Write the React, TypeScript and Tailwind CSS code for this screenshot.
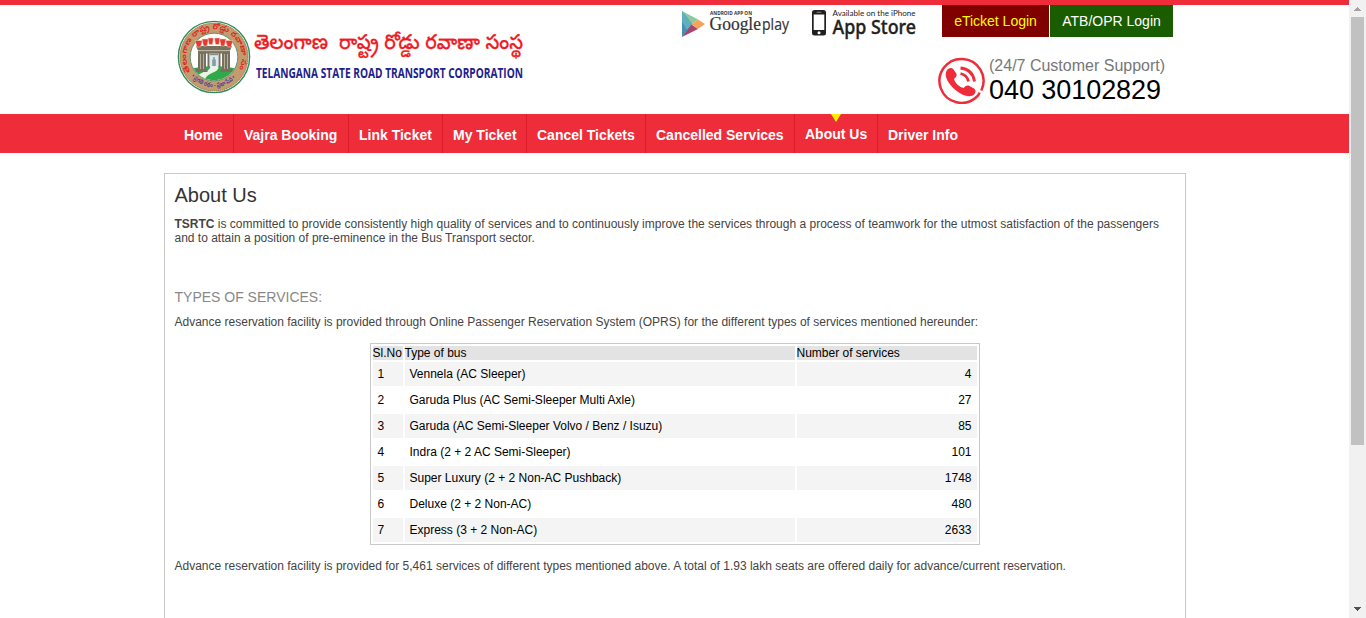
const navItems = [
  { label: 'Home', width: 'w-[60px]' },
  { label: 'Vajra Booking', width: 'w-[115px]' },
  { label: 'Link Ticket', width: 'w-[94px]' },
  { label: 'My Ticket', width: 'w-[84px]' },
  { label: 'Cancel Tickets', width: 'w-[119px]' },
  { label: 'Cancelled Services', width: 'w-[149px]' },
  { label: 'About Us', width: 'w-[83px]', active: true },
  { label: 'Driver Info', width: 'w-[91px]', last: true },
];

const services: [string, string][] = [
  ['Vennela (AC Sleeper)', '4'],
  ['Garuda Plus (AC Semi-Sleeper Multi Axle)', '27'],
  ['Garuda (AC Semi-Sleeper Volvo / Benz / Isuzu)', '85'],
  ['Indra (2 + 2 AC Semi-Sleeper)', '101'],
  ['Super Luxury (2 + 2 Non-AC Pushback)', '1748'],
  ['Deluxe (2 + 2 Non-AC)', '480'],
  ['Express (3 + 2 Non-AC)', '2633'],
];

function Emblem() {
  return (
    <svg width="74" height="74" viewBox="0 0 74 74" className="shrink-0">
      <defs>
        <path id="ringTop" d="M13.500 51.500 A27.700 27.700 0 1 1 60.500 51.500" />
        <path id="ringBottom" d="M14 56.500 A30.400 30.400 0 0 0 60 56.500" />
        <clipPath id="inner"><circle cx="37" cy="37" r="23.300" /></clipPath>
      </defs>
      <circle cx="37" cy="37" r="35.600" fill="#fff" stroke="#2f8a58" strokeWidth="1.400" />
      <circle cx="37" cy="37" r="29" fill="none" stroke="#c29c6e" strokeWidth="10.500" />
      <circle cx="37" cy="37" r="33.900" fill="none" stroke="#94704a" strokeWidth="0.900" strokeDasharray="1 1" />
      <circle cx="37" cy="37" r="23.800" fill="#fff" stroke="#4e8a62" strokeWidth="0.900" />
      <g clipPath="url(#inner)">
        <path d="M12 49 Q37 43 62 49 V62 H12Z" fill="#32a84a" />
        <path d="M33 46 H41 Q43 50 35 53 Q28 56 27 62 H15 Q20 54 29 51 Q34 49 33 46Z" fill="#e9f5e2" />
        <g fill="#77705f">
          <path d="M19 26h36l-2 4.500H21z" />
          <rect x="21" y="31" width="32" height="2.500" />
          <rect x="21" y="33" width="8" height="17" />
          <rect x="45" y="33" width="8" height="17" />
          <rect x="30.500" y="33" width="2" height="14" />
          <rect x="41.500" y="33" width="2" height="14" />
          <rect x="18.500" y="49" width="12" height="3" />
          <rect x="43.500" y="49" width="12" height="3" />
        </g>
        <path d="M23.500 34v15M26.500 34v15M47.500 34v15M50.500 34v15M22 30.700h30" stroke="#bcb59e" strokeWidth="0.900" />
        <path d="M33 33.500h8v2h-8z" fill="#8c8876" />
        <path d="M33 35.500h8v11h-8z" fill="#d5ecf7" />
        <path d="M36.200 37h1.600v2.500h1V46h-3.600v-6.500h1z" fill="#8f9b98" />
      </g>
      <g fill="#e43a32" stroke="#f6d9bf" strokeWidth="0.500">
        <path d="M18 20.500h7.500l-2 6.500h-3.500z" />
        <path d="M25 19h6.500l-1.500 7h-3.500z" />
        <path d="M31 18h5.500l-1 6.500h-3.500z" />
        <path d="M37.500 18h5.500l-1 6.500h-3.500z" />
        <path d="M42.500 19h6.500l-1.500 7h-3.500z" />
        <path d="M48.500 20.500h7.500l-2 6.500h-3.500z" />
      </g>
      <g fontFamily="'Noto Sans Telugu', 'Noto Sans', sans-serif" fontWeight="600">
        <text fill="#df1a1e" fontSize="7.600">
          <textPath href="#ringTop" textLength="121" lengthAdjust="spacingAndGlyphs">తెలంగాణ రాష్ట్ర రోడ్డు రవాణా సంస్థ</textPath>
        </text>
        <text fill="#4b3a9e" fontSize="6.500">
          <textPath href="#ringBottom" textLength="50" lengthAdjust="spacingAndGlyphs">• ప్రగతి రథం - ప్రజా సేవ •</textPath>
        </text>
      </g>
    </svg>
  );
}

function LogoTitle() {
  return (
    <svg width="276" height="60" viewBox="0 0 276 60" className="shrink-0">
      <text x="3" y="21" fontSize="20.500" fontWeight="500" fill="#f01a22" stroke="#f01a22" strokeWidth="0.250" fontFamily="'Noto Sans Telugu', 'Noto Sans', sans-serif" textLength="74" lengthAdjust="spacingAndGlyphs">తెలంగాణ</text>
      <text x="88" y="21" fontSize="20.500" fontWeight="500" fill="#f01a22" stroke="#f01a22" strokeWidth="0.250" fontFamily="'Noto Sans Telugu', 'Noto Sans', sans-serif" textLength="184" lengthAdjust="spacingAndGlyphs">రాష్ట్ర రోడ్డు రవాణా సంస్థ</text>
      <text x="5" y="50.300" fontSize="15" fontWeight="700" fill="#21218c" fontFamily="'Open Sans', sans-serif" textLength="267" lengthAdjust="spacingAndGlyphs">TELANGANA STATE ROAD TRANSPORT CORPORATION</text>
    </svg>
  );
}

function GooglePlay() {
  return (
    <svg width="110" height="32" viewBox="0 0 110 32">
      <path d="M2 3 L18 11.500 L11.500 16.500Z" fill="#8cc8a0" />
      <path d="M2 3 L2 29 L12.500 16.500Z" fill="#468fb5" />
      <path d="M2 3 L12.500 16.500 L7 22 L2 14Z" fill="#5fb0bd" />
      <path d="M2 29 L11.500 16.500 L18 21Z" fill="#a8436f" />
      <path d="M11.500 16.500 L18 11.500 L25 16 L18 21Z" fill="#f3a45c" />
      <text x="30" y="6.700" fontSize="4.800" fontWeight="700" fill="#333" fontFamily="'Open Sans', sans-serif" textLength="42" lengthAdjust="spacingAndGlyphs">ANDROID APP ON</text>
      <text x="29.500" y="21.500" fontSize="19" fill="#333" stroke="#333" strokeWidth="0.200" fontFamily="'Liberation Serif', serif" textLength="51.500" lengthAdjust="spacingAndGlyphs">Google</text>
      <text x="82" y="21.500" fontSize="17" fill="#333" stroke="#333" strokeWidth="0.200" fontFamily="'Open Sans', sans-serif" textLength="27" lengthAdjust="spacingAndGlyphs">play</text>
    </svg>
  );
}

function AppStore() {
  return (
    <svg width="108" height="32" viewBox="0 0 108 32">
      <rect x="2" y="2" width="14" height="25.500" rx="2.500" fill="#231f20" />
      <rect x="3.700" y="6.500" width="10.600" height="15.500" fill="#fff" />
      <rect x="6.500" y="3.800" width="5" height="0.900" rx="0.400" fill="#888" />
      <circle cx="9" cy="24.700" r="1.500" fill="#fff" />
      <text x="22.500" y="7.500" fontSize="8" fill="#222" fontFamily="Lato, sans-serif" textLength="83" lengthAdjust="spacingAndGlyphs">Available on the iPhone</text>
      <text x="22.500" y="26" fontSize="20.500" fontWeight="500" fill="#231f20" stroke="#231f20" strokeWidth="0.400" fontFamily="'Noto Sans', sans-serif" textLength="83.500" lengthAdjust="spacingAndGlyphs">App Store</text>
    </svg>
  );
}

function PhoneIcon() {
  return (
    <svg width="48" height="48" viewBox="0 0 48 48" fill="none" className="shrink-0">
      <path d="M43.300 34.500 A22 22 0 1 0 38.500 41 Q41 39 41.500 36.500" stroke="#ee2c3a" strokeWidth="2.500" />
      <path d="M9 14 C10.500 12 13.500 11 15.200 13 L18.300 17.500 C19.300 19.500 18.300 21 16 23 C16.500 26.500 22 31.500 25.500 32 C27.500 29.800 29.500 29 31.500 30 L36 32.500 C38 34 38 36 36.500 38 C33.500 41.500 28 40.500 22.500 37.500 C16 33.700 10.500 27.500 8.500 22.500 C7.300 19 7.300 16.500 9 14Z" fill="#ee2c3a" />
      <path d="M22.500 17.500 C27 18.500 29.500 21 30.500 25.500 M22.500 12 C30.500 13 35.500 18 36.500 25.500" stroke="#ee2c3a" strokeWidth="2.800" />
    </svg>
  );
}

function Scrollbar() {
  return (
    <div className="flex h-[618px] w-[17px] shrink-0 flex-col items-center bg-[#f1f1f1]">
      <svg width="17" height="17" shapeRendering="crispEdges">
        <path d="M5 11h7v-1h-1v-1h-1v-1h-1v-1h-1v1h-1v1h-1v1h-1z" fill="#a3a3a3" />
      </svg>
      <div className="h-[428px] w-[13px] bg-[#c1c1c1]" />
      <svg width="17" height="17" className="mt-auto" shapeRendering="crispEdges">
        <path d="M5 6h7v1h-1v1h-1v1h-1v1h-1v-1h-1v-1h-1v-1h-1z" fill="#505050" />
      </svg>
    </div>
  );
}

export default function App() {
  return (
    <div className="flex h-[618px] w-[1366px] overflow-hidden bg-white font-['Liberation_Sans',Arial,sans-serif]">
      <div className="h-[618px] w-[1349px] overflow-hidden border-t-[5px] border-[#ee2c3a]">
        <header className="mx-auto flex h-[109px] w-[1021px]">
          <div className="flex pt-[15px] pl-[13px]">
            <Emblem />
            <div className="pt-[8px]"><LogoTitle /></div>
          </div>
          <div className="ml-auto flex flex-col pr-[12px]">
            <div className="flex items-start">
              <div className="flex pt-[3px]">
                <GooglePlay />
                <div className="ml-[20px] mr-[24px]"><AppStore /></div>
              </div>
              <div className="flex gap-px text-center text-[14px] leading-[32px]">
                <a className="w-[107px] bg-[#800000] text-[#ffff00]">eTicket Login</a>
                <a className="w-[123px] bg-[#1a5c00] text-white">ATB/OPR Login</a>
              </div>
            </div>
            <div className="flex pt-[16px] pl-[258px]">
              <PhoneIcon />
              <div className="ml-[3px] pt-px whitespace-nowrap">
                <div className="text-[16px] leading-[18px] text-[#777]">(24/7 Customer Support)</div>
                <div className="text-[27px] leading-[30px] tracking-[-0.06px] text-black">040 30102829</div>
              </div>
            </div>
          </div>
        </header>

        <nav className="h-[39px] bg-[#ee2c3a]">
          <ul className="mx-auto flex w-[1021px] pl-[10px]">
            {navItems.map((item) => (
              <li
                key={item.label}
                className={`${item.width} relative h-[39px] pl-[10px] text-[14px] leading-[43px] font-bold whitespace-nowrap text-white ${item.last ? '' : 'border-r border-[#dc1b29]'}`}
              >
                {item.active && (
                  <svg width="10" height="8" className="absolute top-0 left-[36px]">
                    <path d="M0 0h10L5 8z" fill="#ffee00" />
                  </svg>
                )}
                <span className={item.active ? 'relative -top-px' : ''}>{item.label}</span>
              </li>
            ))}
          </ul>
        </nav>

        <main className="mx-auto mt-5 h-[600px] w-[1022px] border border-[#c8c8c8] px-[10px] text-[12px] leading-[14px] text-[#444]">
          <h1 className="pt-[9px] text-[20px] leading-[24px] text-[#333]">About Us</h1>
          <p className="mt-[10px]">
            <b>TSRTC</b> is committed to provide consistently high quality of services and to continuously improve the services through a process of teamwork for the utmost satisfaction of the passengers
            <br />
            and to attain a position of pre-eminence in the Bus Transport sector.
          </p>
          <h2 className="mt-[44px] text-[14px] leading-[16px] text-[#888]">TYPES OF SERVICES:</h2>
          <p className="mt-[10px]">
            Advance reservation facility is provided through Online Passenger Reservation System (OPRS) for the different types of services mentioned hereunder:
          </p>
          <div className="mx-auto mt-[14px] flex w-[610px] flex-col gap-[2px] border border-[#c8c8c8] p-[2px] text-black">
            <div className="grid grid-cols-[30px_390px_180px] gap-[2px] leading-[14px]">
              <div className="bg-[#e3e3e3]">Sl.No</div>
              <div className="bg-[#e3e3e3]">Type of bus</div>
              <div className="bg-[#e3e3e3]">Number of services</div>
            </div>
            {services.map(([name, count], i) => (
              <div
                key={name}
                className={`grid grid-cols-[30px_390px_180px] gap-[2px] leading-[24px] ${i % 2 ? '' : '*:bg-[#f4f4f4]'}`}
              >
                <div className="pl-[5px]">{i + 1}</div>
                <div className="pl-[5px]">{name}</div>
                <div className="pr-[5px] text-right">{count}</div>
              </div>
            ))}
          </div>
          <p className="mt-[14px]">
            Advance reservation facility is provided for 5,461 services of different types mentioned above. A total of 1.93 lakh seats are offered daily for advance/current reservation.
          </p>
        </main>
      </div>
      <Scrollbar />
    </div>
  );
}
